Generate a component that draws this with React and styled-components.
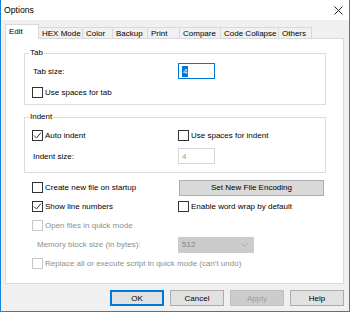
import React from 'react';
import styled, { createGlobalStyle } from 'styled-components';

const GlobalStyle = createGlobalStyle`
  html, body {
    margin: 0;
    padding: 0;
    background: #ffffff;
  }
  * {
    box-sizing: border-box;
  }
`;

const Window = styled.div`
  width: 350px;
  height: 312px;
  background: #f0f0f0;
  border: 1px solid #1883d7;
  border-top: none;
  font-family: "Liberation Sans", Arial, sans-serif;
  font-size: 8px;
  color: #000000;
  display: flex;
  flex-direction: column;
`;

const TitleBar = styled.div`
  height: 20px;
  background: #ffffff;
  display: flex;
  align-items: center;
  justify-content: space-between;
  padding: 0 6px 0 3px;
  font-size: 8.7px;
`;

const Body = styled.div`
  padding: 4px 5px 0 4px;
  display: flex;
  flex-direction: column;
`;

const TabStrip = styled.div`
  display: flex;
  align-items: flex-end;
  height: 15px;
  margin-bottom: -1px;
  position: relative;
  z-index: 1;
`;

const Tab = styled.div`
  width: ${p => p.$w}px;
  height: ${p => (p.$active ? 15 : 12)}px;
  margin-left: ${p => (p.$first ? 0 : -1)}px;
  padding-left: 3px;
  display: flex;
  align-items: center;
  padding-bottom: ${p => (p.$active ? 2 : 0)}px;
  background: ${p => (p.$active ? '#ffffff' : '#f0f0f0')};
  border: 1px solid #d9d9d9;
  border-bottom: ${p => (p.$active ? 'none' : '1px solid #d9d9d9')};
  position: relative;
  z-index: ${p => (p.$active ? 2 : 1)};
  white-space: nowrap;
`;

const Panel = styled.div`
  height: 246px;
  background: #ffffff;
  border: 1px solid #d9d9d9;
  padding: 8px 0 0 18px;
`;

const Group = styled.fieldset`
  width: 302px;
  margin: 0 0 ${p => p.$mb || 0}px 0;
  padding: 0 7px;
  border: 1px solid #dcdcdc;
  min-width: 0;
`;

const Legend = styled.legend`
  padding: 0 1px;
  margin-left: -3px;
  line-height: 12px;
  font-size: 8px;
`;

const Grid = styled.div`
  display: grid;
  grid-template-columns: 146px 1fr;
  grid-auto-rows: ${p => p.$rowH || 16}px;
  row-gap: ${p => p.$gap || 5}px;
  padding: ${p => p.$pt || 0}px 0 ${p => p.$pb || 0}px ${p => p.$pl || 0}px;
  margin-top: ${p => p.$mt || 0}px;
`;

const Cell = styled.div`
  display: flex;
  align-items: center;
  padding-left: ${p => p.$indent || 0}px;
  color: ${p => (p.$disabled ? '#8d8d8d' : '#000000')};
  white-space: nowrap;
  grid-column: ${p => (p.$span ? '1 / span 2' : 'auto')};
`;

const CheckRow = styled.label`
  display: flex;
  align-items: center;
  gap: 2px;
  color: ${p => (p.$disabled ? '#8d8d8d' : '#000000')};
  white-space: nowrap;
`;

const Box = styled.span`
  width: 11px;
  height: 11px;
  border: 1px solid ${p => (p.$disabled ? '#c8c8c8' : '#333333')};
  background: #ffffff;
  display: flex;
  align-items: center;
  justify-content: center;
  flex-shrink: 0;
`;

const EditBox = styled.div`
  width: 37px;
  height: 16px;
  border: 1px solid ${p => (p.$focused ? '#0078d7' : '#d6d6d6')};
  background: #ffffff;
  color: ${p => (p.$disabled ? '#9a9a9a' : '#000000')};
  display: flex;
  align-items: center;
  padding-left: 3px;
`;

const Selected = styled.span`
  background: #0078d7;
  color: #ffffff;
  padding: 0 1px;
  line-height: 11px;
`;

const Dropdown = styled.div`
  width: 76px;
  height: 16px;
  background: #cccccc;
  color: #838383;
  display: flex;
  align-items: center;
  justify-content: space-between;
  padding: 0 6px 0 4px;
`;

const Button = styled.div`
  width: ${p => p.$w || 54}px;
  height: 16px;
  display: flex;
  align-items: center;
  justify-content: center;
  background: ${p => (p.$disabled ? '#cccccc' : p.$bg || '#e1e1e1')};
  color: ${p => (p.$disabled ? '#9d9d9d' : '#000000')};
  border: ${p => (p.$default ? '2px solid #0078d7' : `1px solid ${p.$disabled ? '#bfbfbf' : '#adadad'}`)};
  white-space: nowrap;
`;

const ButtonBar = styled.div`
  display: flex;
  justify-content: flex-end;
  gap: 6px;
  margin-top: 6px;
`;

const Check = ({ checked, disabled, children }) => (
  <CheckRow $disabled={disabled}>
    <Box $disabled={disabled}>
      {checked && (
        <svg width="9" height="9" viewBox="0 0 9 9">
          <polyline points="1,4.5 3.5,7 8,1.5" fill="none" stroke="#333" strokeWidth="1" />
        </svg>
      )}
    </Box>
    {children}
  </CheckRow>
);

const tabs = [
  { label: 'Edit', w: 34 },
  { label: 'HEX Mode', w: 45 },
  { label: 'Color', w: 31 },
  { label: 'Backup', w: 36 },
  { label: 'Print', w: 33 },
  { label: 'Compare', w: 42 },
  { label: 'Code Collapse', w: 59 },
  { label: 'Others', w: 34 },
];

export default function App() {
  return (
    <>
      <GlobalStyle />
      <Window>
        <TitleBar>
          <span>Options</span>
          <svg width="9" height="9" viewBox="0 0 9 9">
            <path d="M0.5 0.5 L8.5 8.5 M8.5 0.5 L0.5 8.5" stroke="#222" strokeWidth="1" />
          </svg>
        </TitleBar>
        <Body>
          <TabStrip>
            {tabs.map((t, i) => (
              <Tab key={t.label} $w={t.w} $first={i === 0} $active={i === 0}>
                {t.label}
              </Tab>
            ))}
          </TabStrip>
          <Panel>
            <Group $mb={6}>
              <Legend>Tab</Legend>
              <Grid $pt={4} $pb={4}>
                <Cell $indent={1}>Tab size:</Cell>
                <Cell>
                  <EditBox $focused>
                    <Selected>4</Selected>
                  </EditBox>
                </Cell>
                <Cell $span>
                  <Check>Use spaces for tab</Check>
                </Cell>
              </Grid>
            </Group>
            <Group>
              <Legend>Indent</Legend>
              <Grid $pt={4} $pb={8}>
                <Cell>
                  <Check checked>Auto indent</Check>
                </Cell>
                <Cell>
                  <Check>Use spaces for indent</Check>
                </Cell>
                <Cell $indent={1}>Indent size:</Cell>
                <Cell>
                  <EditBox $disabled>4</EditBox>
                </Cell>
              </Grid>
            </Group>
            <Grid $mt={7} $pl={8} $rowH={15} $gap={4}>
              <Cell>
                <Check>Create new file on startup</Check>
              </Cell>
              <Cell $indent={1}>
                <Button $w={145} $bg="#d9d9d9">Set New File Encoding</Button>
              </Cell>
              <Cell>
                <Check checked>Show line numbers</Check>
              </Cell>
              <Cell>
                <Check>Enable word wrap by default</Check>
              </Cell>
              <Cell $span>
                <Check disabled>Open files in quick mode</Check>
              </Cell>
              <Cell $disabled $indent={5}>Memory block size (in bytes):</Cell>
              <Cell>
                <Dropdown>
                  <span>512</span>
                  <svg width="7" height="4" viewBox="0 0 7 4">
                    <polyline points="0.5,0.5 3.5,3.5 6.5,0.5" fill="none" stroke="#a8a8a8" strokeWidth="1" />
                  </svg>
                </Dropdown>
              </Cell>
              <Cell $span>
                <Check disabled>Replace all or execute script in quick mode (can't undo)</Check>
              </Cell>
            </Grid>
          </Panel>
          <ButtonBar>
            <Button $default>OK</Button>
            <Button>Cancel</Button>
            <Button $disabled>Apply</Button>
            <Button>Help</Button>
          </ButtonBar>
        </Body>
      </Window>
    </>
  );
}
